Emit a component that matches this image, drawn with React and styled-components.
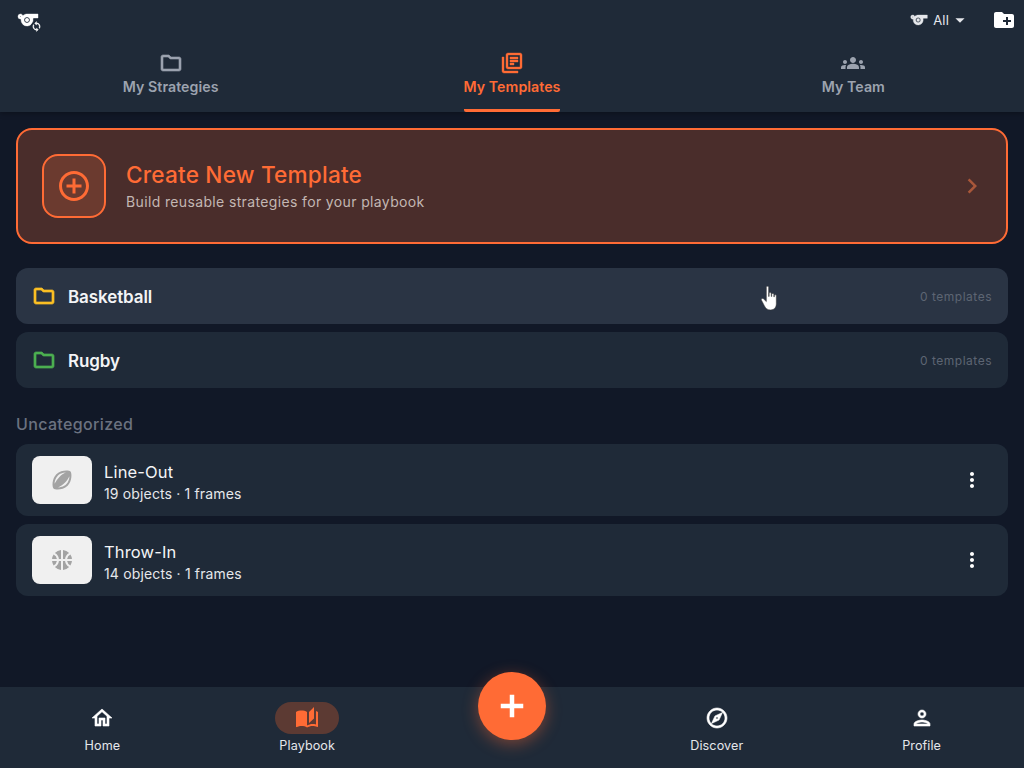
import React from "react";
import styled, { createGlobalStyle } from "styled-components";
import {
  MdAddCircleOutline, MdArrowDropDown, MdChevronRight, MdCreateNewFolder, MdGroups, MdAutoStories,
  MdMoreVert, MdOutlineExplore, MdOutlineFolder, MdOutlineHome, MdOutlineLibraryBooks, MdOutlinePerson,
  MdSports, MdSportsBasketball, MdSportsRugby, MdAdd, MdSync,
} from "react-icons/md";

const Global = createGlobalStyle`
  html, body { margin: 0; padding: 0; background: #111827; }
  * { box-sizing: border-box; }
  body { font-family: Inter, "Liberation Sans", sans-serif; }
`;
const Page = styled.div`
  position: relative; width: 1024px; height: 768px; overflow: hidden;
  display: flex; flex-direction: column; background: #111827; color: #fff;
`;
const Header = styled.header`
  height: 112px; background: #1f2a38; flex: none; display: flex; flex-direction: column;
  box-shadow: 0 2px 5px rgba(0,0,0,.25);
`;
const TopRow = styled.div`
  height: 38px; flex: none; display: flex; align-items: center; justify-content: space-between; padding: 2px 8px 0 16px;
`;
const Bold = styled.span`
  display: flex;
  svg path { stroke: currentColor; stroke-width: ${p => p.$w || 0.6}px; }
  svg path[fill="none"] { stroke: none; }
`;
const Logo = styled.div`position: relative; width: 24px; height: 24px; display: flex;`;
const LogoBadge = styled.span`
  position: absolute; right: -2px; bottom: 0; width: 11px; height: 11px; border-radius: 50%;
  background: #1f2a38; display: flex; align-items: center; justify-content: center; color: #fff;
`;
const TopActions = styled.div`display: flex; align-items: center; gap: 21px;`;
const Filter = styled.div`display: flex; align-items: center; font-size: 13px; letter-spacing: .2px; color: #e5e7eb;`;
const FilterText = styled.span`margin-left: 4px;`;
const Caret = styled.span`display: flex;`;
const Tabs = styled.nav`flex: 1; display: grid; grid-template-columns: repeat(3, 1fr);`;
const Tab = styled.div`
  display: flex; flex-direction: column; align-items: center;
  color: ${p => p.$active ? "#ff6b35" : "#9ca3af"};
`;
const TabInner = styled.div`
  height: 74px; padding-top: 13px; display: flex; flex-direction: column; align-items: center; gap: 2px;
  border-bottom: 3px solid ${p => p.$active ? "#ff6b35" : "transparent"}; border-radius: 0 0 2px 2px;
`;
const TabLabel = styled.span`font-size: 14.2px; font-weight: 600; line-height: 20px; letter-spacing: .05px;`;
const Content = styled.main`flex: 1; padding: 16px 16px 0; display: flex; flex-direction: column;`;
const Cta = styled.div`
  height: 116px; flex: none; border: 2px solid #ff6b35; border-radius: 16px; background: #4a2d2b;
  display: flex; align-items: center; padding: 0 24px; margin-bottom: 24px;
`;
const CtaIcon = styled.div`
  width: 64px; height: 64px; border: 2px solid #ff6b35; border-radius: 16px; background: #6b3a2f;
  display: flex; align-items: center; justify-content: center; color: #ff6b35; margin-right: 20px;
`;
const CtaBody = styled.div`flex: 1; display: flex; flex-direction: column; gap: 3px; padding-bottom: 2px;`;
const CtaTitle = styled.div`font-size: 22.6px; font-weight: 500; color: #ff6b35; line-height: 30px; letter-spacing: .2px;`;
const CtaSub = styled.div`font-size: 14px; color: #c3b7b3; line-height: 18px; letter-spacing: .36px;`;
const Chevron = styled.span`display: flex; color: #a9573a; margin-right: -5px;`;
const FolderRow = styled.div`
  height: 56px; flex: none; border-radius: 12px; background: ${p => p.$light ? "#2a3444" : "#1f2a38"};
  display: flex; align-items: center; padding: 0 16px; margin-bottom: 8px; color: ${p => p.$color};
`;
const FolderName = styled.span`flex: 1; margin-left: 12px; padding-top: 1px; font-size: 17px; font-weight: 600; color: #f3f4f6; letter-spacing: -.1px;`;
const FolderCount = styled.span`font-size: 12px; color: #5d6573; letter-spacing: .5px;`;
const SectionTitle = styled.h2`
  margin: 16px 0 8px; font-size: 16px; font-weight: 500; line-height: 24px; color: #6b7280; letter-spacing: .35px;
`;
const Item = styled.div`
  height: 72px; flex: none; border-radius: 12px; background: #1f2a38; display: flex; align-items: center;
  padding: 0 16px; margin-bottom: 8px;
`;
const Thumb = styled.div`
  width: 60px; height: 48px; border-radius: 8px; background: #f0f0f0; color: #a3a3a3;
  display: flex; align-items: center; justify-content: center; margin-right: 12px;
`;
const ItemBody = styled.div`flex: 1; display: flex; flex-direction: column; gap: 1px; padding-top: 4px;`;
const ItemName = styled.div`font-size: 16.5px; font-weight: 400; line-height: 22px; color: #f3f4f6; letter-spacing: .15px;`;
const ItemMeta = styled.div`font-size: 14px; line-height: 19px; color: #e5e7eb; letter-spacing: .15px;`;
const More = styled.span`display: flex; color: #fff; margin-right: 8px; margin-top: -1px;`;
const BottomNav = styled.nav`
  height: 81px; flex: none; background: #1f2a38; display: grid;
  grid-template-columns: repeat(5, 1fr);
`;
const NavItem = styled.div`
  display: flex; flex-direction: column; align-items: center; padding-top: 15px; color: #fff;
`;
const NavIcon = styled.div`
  width: 64px; height: 32px; border-radius: 16px; display: flex; align-items: center; justify-content: center;
  background: ${p => p.$active ? "#5c3a33" : "transparent"}; color: ${p => p.$active ? "#ff6b35" : "#fff"};
`;
const NavLabel = styled.span`margin-top: 3px; font-size: 12.6px; line-height: 18px; font-weight: 400; color: #e5e7eb; letter-spacing: .1px;`;
const Fab = styled.div`
  position: absolute; left: 478px; top: 672px; width: 68px; height: 68px; border-radius: 50%;
  background: #ff6b35; color: #fff; display: flex; align-items: center; justify-content: center;
  box-shadow: 0 4px 16px rgba(255,107,53,.4);
`;
const Cursor = styled.svg`position: absolute; left: 760px; top: 285px;`;

const Folder = ({ name, color, light }) => (
  <FolderRow $color={color} $light={light}>
    <Bold $w={0.7}><MdOutlineFolder size={24} /></Bold>
    <FolderName>{name}</FolderName>
    <FolderCount>0 templates</FolderCount>
  </FolderRow>
);
const Template = ({ name, meta, icon: Icon }) => (
  <Item>
    <Thumb><Icon size={24} /></Thumb>
    <ItemBody><ItemName>{name}</ItemName><ItemMeta>{meta}</ItemMeta></ItemBody>
    <More><MdMoreVert size={24} /></More>
  </Item>
);

export default function App() {
  return (
    <Page>
      <Global />
      <Header>
        <TopRow>
          <Logo><Bold $w={0.4}><MdSports size={24} /></Bold><LogoBadge><Bold $w={0.8}><MdSync size={11} /></Bold></LogoBadge></Logo>
          <TopActions>
            <Filter><Bold $w={0.4}><MdSports size={20} /></Bold><FilterText>All</FilterText><Caret><MdArrowDropDown size={22} /></Caret></Filter>
            <MdCreateNewFolder size={24} />
          </TopActions>
        </TopRow>
        <Tabs>
          <Tab><TabInner><Bold><MdOutlineFolder size={24} /></Bold><TabLabel>My Strategies</TabLabel></TabInner></Tab>
          <Tab $active><TabInner $active><Bold $w={0.4}><MdOutlineLibraryBooks size={24} /></Bold><TabLabel>My Templates</TabLabel></TabInner></Tab>
          <Tab><TabInner><MdGroups size={24} /><TabLabel>My Team</TabLabel></TabInner></Tab>
        </Tabs>
      </Header>
      <Content>
        <Cta>
          <CtaIcon><MdAddCircleOutline size={36} /></CtaIcon>
          <CtaBody>
            <CtaTitle>Create New Template</CtaTitle>
            <CtaSub>Build reusable strategies for your playbook</CtaSub>
          </CtaBody>
          <Chevron><MdChevronRight size={30} /></Chevron>
        </Cta>
        <Folder name="Basketball" color="#fbbf24" light />
        <Folder name="Rugby" color="#4caf50" />
        <SectionTitle>Uncategorized</SectionTitle>
        <Template name="Line-Out" meta="19 objects · 1 frames" icon={MdSportsRugby} />
        <Template name="Throw-In" meta="14 objects · 1 frames" icon={MdSportsBasketball} />
      </Content>
      <BottomNav>
        <NavItem><NavIcon><Bold><MdOutlineHome size={24} /></Bold></NavIcon><NavLabel>Home</NavLabel></NavItem>
        <NavItem><NavIcon $active><MdAutoStories size={24} /></NavIcon><NavLabel>Playbook</NavLabel></NavItem>
        <div />
        <NavItem><NavIcon><Bold><MdOutlineExplore size={24} /></Bold></NavIcon><NavLabel>Discover</NavLabel></NavItem>
        <NavItem><NavIcon><Bold><MdOutlinePerson size={24} /></Bold></NavIcon><NavLabel>Profile</NavLabel></NavItem>
      </BottomNav>
      <Fab><Bold $w={1}><MdAdd size={36} /></Bold></Fab>
      <Cursor width="21" height="27" viewBox="0 0 20 26">
        <path d="M6 2.2c0-1.4 2.2-1.4 2.2 0V11h.5V8.2c0-1.2 2-1.2 2 0V11h.5V9c0-1.2 2-1.2 2 0v2.4h.5v-1c0-1.2 1.9-1.2 1.9 0V18c0 3.6-2 6-5.600 6-3 0-4.400-1.400-5.800-3.800L1.300 14.600c-.7-1.200.9-2.300 1.900-1.300L6 16z" fill="#fff" stroke="#333" strokeWidth=".5" />
      </Cursor>
    </Page>
  );
}
